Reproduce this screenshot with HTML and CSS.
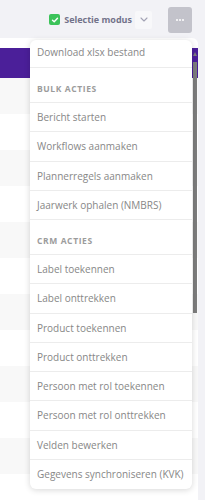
FILE: index.html
```html
<!DOCTYPE html>
<html lang="nl">
<head>
<meta charset="utf-8">
<title>Selectie modus</title>
<link rel="stylesheet" href="styles.css">
</head>
<body>
<div class="toolbar">
  <label class="select-mode">
    <span class="checkbox">
      <svg width="8" height="8" viewBox="0 0 8 8"><path d="M1.5 4.2 L3.2 5.8 L6.5 2.2" fill="none" stroke="#fff" stroke-width="1.4" stroke-linecap="round" stroke-linejoin="round"/></svg>
    </span>
    <span class="select-label">Selectie modus</span>
  </label>
  <button class="chevron-btn" type="button">
    <svg width="8" height="5" viewBox="0 0 8 5"><path d="M1 1 L4 4 L7 1" fill="none" stroke="#a3a3b5" stroke-width="1.1" stroke-linecap="round" stroke-linejoin="round"/></svg>
  </button>
  <button class="more-btn" type="button">
    <span class="dot"></span><span class="dot"></span><span class="dot"></span>
  </button>
</div>
<div class="card">
  <div class="table-head"></div>
  <div class="row alt"></div>
  <div class="row"></div>
  <div class="row alt"></div>
  <div class="row"></div>
  <div class="row alt"></div>
  <div class="row"></div>
  <div class="row alt"></div>
  <div class="row"></div>
  <div class="row alt"></div>
  <div class="row"></div>
  <div class="row alt"></div>
  <div class="row"></div>
</div>
<div class="scrollbar">
  <span class="scroll-arrow"></span>
  <span class="scroll-thumb"></span>
</div>
<div class="menu">
  <div class="item first">Download xlsx bestand</div>
  <div class="section">BULK ACTIES</div>
  <div class="item">Bericht starten</div>
  <div class="item">Workflows aanmaken</div>
  <div class="item">Plannerregels aanmaken</div>
  <div class="item">Jaarwerk ophalen (NMBRS)</div>
  <div class="section">CRM ACTIES</div>
  <div class="item">Label toekennen</div>
  <div class="item">Label onttrekken</div>
  <div class="item">Product toekennen</div>
  <div class="item">Product onttrekken</div>
  <div class="item">Persoon met rol toekennen</div>
  <div class="item">Persoon met rol onttrekken</div>
  <div class="item">Velden bewerken</div>
  <div class="item last">Gegevens synchroniseren (KVK)</div>
</div>
</body>
</html>
```
FILE: styles.css
```css
* { box-sizing: border-box; }
html, body { margin: 0; padding: 0; }
body {
  width: 205px;
  height: 500px;
  overflow: hidden;
  background: #f2f2f6;
  font-family: "Open Sans", "Noto Sans", sans-serif;
  position: relative;
}
.toolbar {
  height: 38px;
  display: flex;
  align-items: center;
  justify-content: flex-end;
  padding-right: 13px;
  padding-top: 1px;
}
.select-mode {
  display: flex;
  align-items: center;
  gap: 4px;
}
.checkbox {
  width: 11px;
  height: 11px;
  border-radius: 2px;
  background: #3cc35a;
  display: flex;
  align-items: center;
  justify-content: center;
}
.select-label {
  font-size: 9px;
  font-weight: 700;
  color: #72728a;
}
.chevron-btn {
  margin-left: 3px;
  width: 17px;
  height: 18px;
  border: 0;
  padding: 0;
  border-radius: 2px;
  background: #f8f8fa;
  display: flex;
  align-items: center;
  justify-content: center;
}
.more-btn {
  margin-left: 16px;
  width: 24px;
  height: 26px;
  border: 0;
  padding: 0;
  border-radius: 3px;
  background: #c3c3cb;
  display: flex;
  align-items: center;
  justify-content: center;
  gap: 1px;
}
.dot {
  width: 2px;
  height: 2px;
  border-radius: 50%;
  background: #fff;
}
.card {
  margin-right: 7px;
  background: #fff;
  border-top-right-radius: 6px;
  padding-top: 10px;
  height: 462px;
  overflow: hidden;
}
.table-head {
  height: 30px;
  background: #4b1f99;
}
.row {
  height: 36px;
  background: #fff;
}
.row.alt { background: #f8f8f8; }
.scrollbar {
  position: absolute;
  left: 193px;
  top: 52px;
  width: 4px;
}
.scroll-arrow {
  display: block;
  margin: 0 auto;
  width: 0;
  height: 0;
  border-left: 2px solid transparent;
  border-right: 2px solid transparent;
  border-bottom: 4px solid #7d7d7d;
}
.scroll-thumb {
  display: block;
  margin-top: 6px;
  width: 4px;
  height: 251px;
  background: #7d7d7d;
}
.menu {
  position: absolute;
  left: 30px;
  top: 40px;
  width: 162px;
  background: #fff;
  border-radius: 6px;
  box-shadow: 0 1px 6px rgba(0, 0, 0, 0.16);
  overflow: hidden;
}
.item {
  height: 29.25px;
  display: flex;
  align-items: center;
  padding: 0 7px;
  font-size: 10px;
  color: #878787;
  border-bottom: 1px solid #ececec;
  white-space: nowrap;
}
.item.first { height: 28px; padding-bottom: 3px; }
.item.last { border-bottom: 0; }
.section {
  height: 35px;
  display: flex;
  align-items: center;
  padding: 7px 7px 0;
  font-size: 8.5px;
  font-weight: 700;
  letter-spacing: 0.6px;
  color: #9c9c9c;
  border-bottom: 1px solid #ececec;
}
```
